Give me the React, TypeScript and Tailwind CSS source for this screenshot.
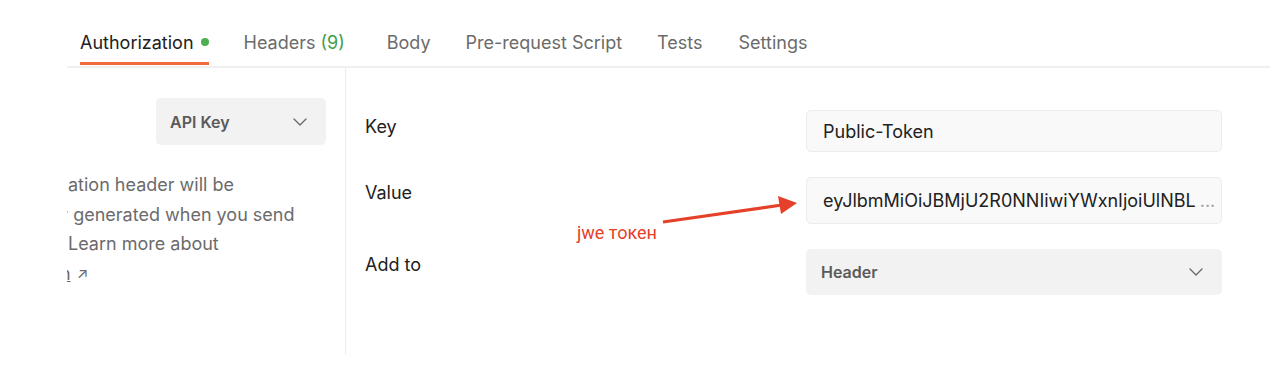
import React from "react";

const Chevron = () => (
  <svg width="14" height="8" viewBox="0 0 14 8" fill="none">
    <path d="M1 1l6 6 6-6" stroke="#6b6b6b" strokeWidth="1.4" strokeLinecap="round" strokeLinejoin="round" />
  </svg>
);

export default function App() {
  return (
    <div className="relative w-[1284px] h-[380px] bg-white overflow-hidden text-[18px]" style={{ fontFamily: "Inter, 'Noto Sans', sans-serif" }}>
      <div className="pl-[67px] pr-[14px]">
        <div className="flex items-end h-[68px] border-b-2 border-[#f0f0f0] pl-[13px]">
          <div className="flex flex-col">
            <div className="flex items-center h-[30px] text-[#212121]">
              Authorization
              <span className="ml-[7px] w-[8px] h-[8px] rounded-full bg-[#4caf50]" />
            </div>
            <div className="h-[3px] bg-[#f26b3a] mt-[5px] mb-[1px]" />
          </div>
          <div className="flex items-center h-[30px] mb-[9px] ml-[35px] text-[#6b6b6b]">
            Headers <span className="ml-[5px] text-[#3d9e48]">(9)</span>
          </div>
          <div className="flex items-center h-[30px] mb-[9px] ml-[42px] text-[#6b6b6b]">Body</div>
          <div className="flex items-center h-[30px] mb-[9px] ml-[35px] text-[#6b6b6b]">Pre-request Script</div>
          <div className="flex items-center h-[30px] mb-[9px] ml-[35px] text-[#6b6b6b]">Tests</div>
          <div className="flex items-center h-[30px] mb-[9px] ml-[36px] text-[#6b6b6b]">Settings</div>
        </div>
        <div className="flex h-[287px]">
          <div className="w-[279px] shrink-0 border-r border-[#ededed] overflow-hidden">
            <div className="flex justify-end pr-[19px] pt-[30px]">
              <div className="w-[170px] h-[47px] rounded-[5px] bg-[#f2f2f2] flex items-center justify-between pl-[14px] pr-[19px]">
                <span className="font-semibold text-[16px] text-[#5a5a5a]">API Key</span>
                <Chevron />
              </div>
            </div>
            <div className="mt-[25px] text-[18px] text-[#6b6b6b] leading-[29.5px] whitespace-nowrap">
              <div className="ml-[1px]">ation header will be</div>
              <div className="ml-[-9px]">y generated when you send</div>
              <div className="ml-[1px]">Learn more about</div>
              <div className="flex items-center ml-[-7px]">
                <span className="underline">n</span>
                <span className="ml-[6px] text-[15px]">↗</span>
              </div>
            </div>
          </div>
          <div className="flex-1 pl-[19px] pt-[42px]">
            <div className="grid grid-cols-[441px_416px] gap-y-[25px]">
              <div className="pt-[3px] text-[#212121]">Key</div>
              <div className="h-[42px] rounded-[5px] bg-[#f9f9f9] border border-[#ececec] flex items-center pl-[16px] text-[#212121]">Public-Token</div>
              <div className="pt-[2px] text-[#212121]">Value</div>
              <div className="h-[47px] rounded-[5px] bg-[#f9f9f9] border border-[#ececec] flex items-center pl-[16px] pr-[16px] text-[#212121] whitespace-nowrap overflow-hidden">
                <span>eyJlbmMiOiJBMjU2R0NNIiwiYWxnIjoiUlNBL</span>
                <span className="ml-[4px] text-[#9a9a9a]">...</span>
              </div>
              <div className="pt-[2px] text-[#212121]">Add to</div>
              <div className="h-[46px] rounded-[5px] bg-[#f2f2f2] flex items-center justify-between pl-[15px] pr-[19px]">
                <span className="font-semibold text-[16px] text-[#5a5a5a]">Header</span>
                <Chevron />
              </div>
            </div>
          </div>
        </div>
      </div>
      <svg className="absolute left-0 top-0 pointer-events-none" width="1284" height="380">
        <line x1="663" y1="222" x2="782" y2="205" stroke="#e5402a" strokeWidth="3.2" />
        <polygon points="797,203 778,196 781,214" fill="#e5402a" />
      </svg>
      <div className="absolute left-[577px] top-[221px] text-[18px] leading-[24px] text-[#e5402a]" style={{ fontFamily: "Roboto, sans-serif" }}>jwe токен</div>
    </div>
  );
}
